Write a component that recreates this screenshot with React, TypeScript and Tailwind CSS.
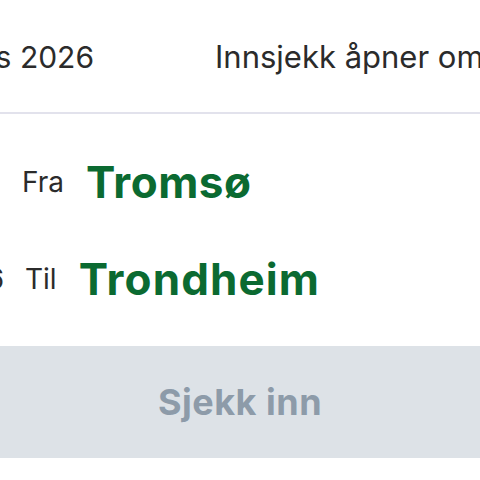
export default function App() {
  const font = { fontFamily: 'Inter, "Noto Sans", sans-serif' };
  return (
    <div className="w-[480px] h-[480px] overflow-hidden bg-white relative" style={font}>
      <div className="flex items-center h-[112px] whitespace-nowrap text-[30px] text-[#2b2b2b] pt-[2px]">
        <div className="w-[215px] shrink-0 flex justify-end">
          <span className="mr-[121px]">16. mars 2026</span>
        </div>
        <span className="text-[31px]">Innsjekk åpner om 2 timer</span>
      </div>
      <div className="h-[2px] bg-[#e2e2ec]" />
      <div className="flex flex-col">
        <div className="flex items-center h-[103px] pt-[33px] whitespace-nowrap leading-none">
          <span className="text-[28px] text-[#2b2b2b] ml-[22px]">Fra</span>
          <span className="text-[44px] font-bold text-[#0b6a31] ml-[22px] tracking-[0.5px]">Tromsø</span>
        </div>
        <div className="flex items-center h-[96px] pt-[28px] whitespace-nowrap leading-none">
          <span className="w-[80px] shrink-0 text-right text-[28px] text-[#2b2b2b] -ml-[76px]">14:16</span>
          <span className="text-[28px] text-[#2b2b2b] ml-[21px]">Til</span>
          <span className="text-[44px] font-bold text-[#0b6a31] ml-[22px] tracking-[1.1px]">Trondheim</span>
        </div>
      </div>
      <div className="mt-[33px] h-[112px] bg-[#dde2e7] flex items-center justify-center">
        <span className="text-[36px] font-bold text-[#8d9ba9] tracking-[0.5px]">Sjekk inn</span>
      </div>
    </div>
  );
}
